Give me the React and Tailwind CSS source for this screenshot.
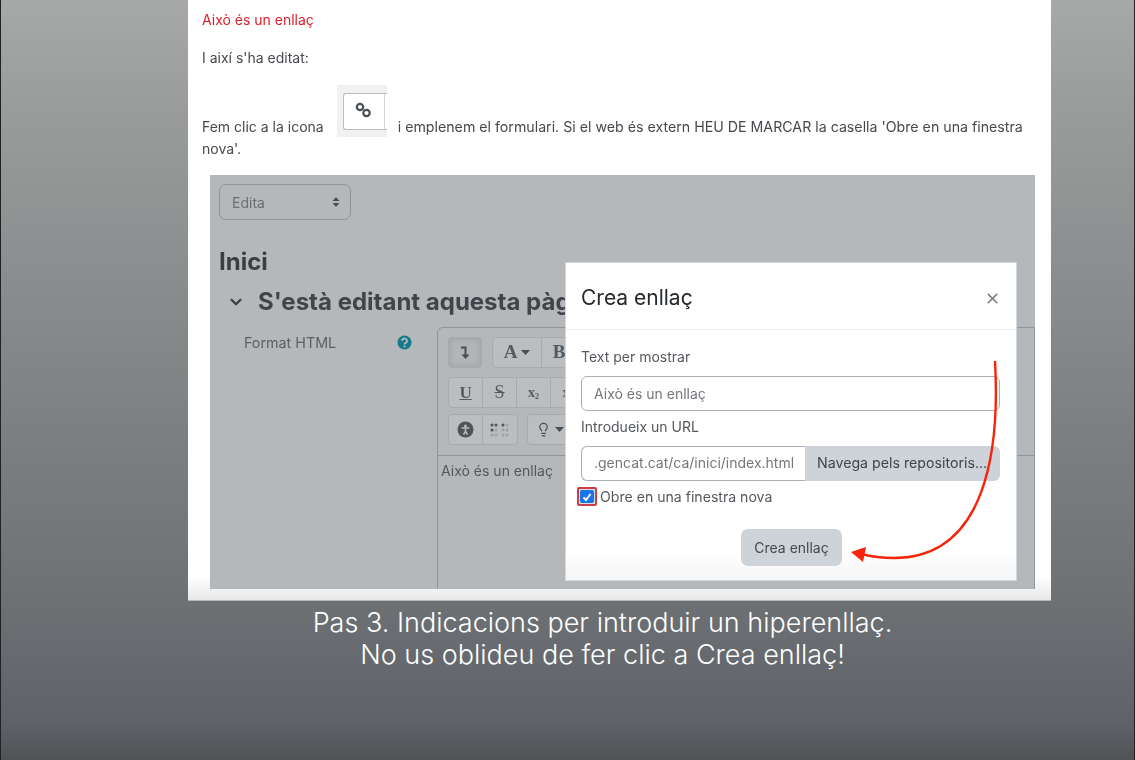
import { ChevronDown, X, Lightbulb } from 'lucide-react';

const inter = { fontFamily: 'Inter, "Liberation Sans", Arial, sans-serif' };
const serif = { fontFamily: '"Liberation Serif", serif' };

function ToolBtn({ children, w = 'w-[34px]' }) {
  return (
    <div className={`${w} h-[29px] flex items-center justify-center text-[#4a4f54]`}>
      {children}
    </div>
  );
}

function Group({ children, className = '' }) {
  return (
    <div className={`flex w-fit rounded-[4px] border border-[#a6abaf] bg-[#babec1] divide-x divide-[#a6abaf] ${className}`}>
      {children}
    </div>
  );
}

function Caret() {
  return (
    <svg width="9" height="5" viewBox="0 0 9 5" className="ml-[4px]">
      <path d="M0 0h9L4.5 5z" fill="#4a4f54" />
    </svg>
  );
}

function Editor() {
  return (
    <div className="w-[640px] h-[270px] rounded-tl-[6px] border border-[#8f9498] bg-[#b4b8bb]">
      <div className="h-[128px] border-b border-[#8f9498] pl-[10px] pt-[9px] flex flex-col">
        <div className="flex gap-[10px]">
          <Group className="shadow-[inset_0_0_6px_rgba(0,0,0,0.12)] !bg-[#b1b5b8]">
            <ToolBtn w="w-[32px]">
              <svg width="12" height="15" viewBox="0 0 12 15" fill="none" stroke="#4a4f54" strokeWidth="2">
                <path d="M2 2.5h4.5V11" />
                <path d="M2.5 9.5h8l-4 4.5z" fill="#4a4f54" stroke="none" />
              </svg>
            </ToolBtn>
          </Group>
          <Group>
            <ToolBtn w="w-[49px]">
              <span className="text-[19px] font-bold text-[#555a5e]" style={serif}>A</span>
              <Caret />
            </ToolBtn>
            <ToolBtn>
              <span className="text-[19px] font-bold text-[#555a5e]" style={serif}>B</span>
            </ToolBtn>
          </Group>
        </div>
        <Group className="mt-[9px]">
          <ToolBtn><span className="text-[17px] font-bold underline text-[#555a5e]" style={serif}>U</span></ToolBtn>
          <ToolBtn><span className="text-[18px] line-through text-[#555a5e]" style={serif}>S</span></ToolBtn>
          <ToolBtn><span className="text-[14px] font-bold text-[#555a5e]" style={serif}>x<sub className="text-[8px]">2</sub></span></ToolBtn>
          <ToolBtn><span className="text-[14px] font-bold text-[#555a5e]" style={serif}>x<sup className="text-[8px]">2</sup></span></ToolBtn>
        </Group>
        <div className="mt-[6px] flex gap-[9px]">
          <Group>
            <ToolBtn>
              <svg width="17" height="17" viewBox="0 0 17 17">
                <circle cx="8.5" cy="8.5" r="8" fill="#4f5458" />
                <circle cx="8.5" cy="5" r="1.5" fill="#b9bdc0" />
                <path d="M4.5 7h8M8.5 7v3.5M8.5 10.5l-2 3M8.5 10.5l2 3" stroke="#b9bdc0" strokeWidth="1.5" fill="none" />
              </svg>
            </ToolBtn>
            <ToolBtn>
              <svg width="20" height="14" viewBox="0 0 20 14">
                {[0, 1, 2, 3, 4, 5].map(i => (
                  <g key={i}>
                    <circle cx={2 + (i % 2) * 4} cy={2 + Math.floor(i / 2) * 5} r="1.5" fill={i < 3 ? '#4f5458' : '#9fa3a7'} />
                    <circle cx={13 + (i % 2) * 4} cy={2 + Math.floor(i / 2) * 5} r="1.5" fill={i < 1 ? '#4f5458' : '#9fa3a7'} />
                  </g>
                ))}
              </svg>
            </ToolBtn>
          </Group>
          <Group>
            <ToolBtn w="w-[44px]">
              <Lightbulb size={15} />
              <Caret />
            </ToolBtn>
          </Group>
        </div>
      </div>
      <p className="pl-[3px] pt-[6px] text-[14px] leading-[18px] text-[#54585c]">Això és un enllaç</p>
    </div>
  );
}

function LinkDialog() {
  return (
    <div className="absolute left-[355px] top-[87px] w-[452px] h-[319px] border border-[#d5d8da] bg-[linear-gradient(to_bottom,#ffffff_90%,#f6f6f6_100%)]">
      <div className="h-[67px] border-b border-[#e9ebed] pl-[15px] pr-[15px] pt-[4px] flex items-center justify-between">
        <h3 className="text-[21px] text-[#26292c]">Crea enllaç</h3>
        <X size={17} strokeWidth={2.2} className="text-[#75797d]" />
      </div>
      <div className="pl-[15px] pr-[16px] pt-[17px]">
        <label className="block text-[14px] leading-[20px] text-[#55595d]">Text per mostrar</label>
        <div className="mt-[9px] h-[35px] rounded-[6px] border border-[#a9afb6] pl-[12px] flex items-center text-[14px] text-[#73777b]">
          Això és un enllaç
        </div>
        <label className="block mt-[6px] text-[14px] leading-[20px] text-[#55595d]">Introdueix un URL</label>
        <div className="mt-[9px] h-[35px] flex">
          <div className="w-[224px] rounded-l-[6px] border border-r-0 border-[#a9afb6] pl-[12px] pb-[2px] flex items-center text-[14px] text-[#73777b] whitespace-nowrap overflow-hidden">
            .gencat.cat/ca/inici/index.html
          </div>
          <div className="flex-1 rounded-r-[6px] bg-[#ced3da] pl-[12px] pb-[2px] flex items-center text-[14.2px] text-[#3f4448] whitespace-nowrap overflow-hidden">
            Navega pels repositoris...
          </div>
        </div>
        <div className="mt-[5px] -ml-[4px] flex items-center gap-[3px] text-[14.1px] text-[#55595d]">
          <span className="w-[20px] h-[19px] border-2 border-[#cc3d4a] rounded-[2px] flex items-center justify-center bg-[#d8dde0]">
            <span className="w-[14px] h-[13px] rounded-[2px] bg-[#1976e8] flex items-center justify-center">
              <svg width="10" height="10" viewBox="0 0 10 10" fill="none" stroke="white" strokeWidth="2"><path d="M1.5 5.5L4 8l4.5-6" /></svg>
            </span>
          </span>
          Obre en una finestra nova
        </div>
        <div className="mt-[22px] flex justify-center pl-[2px]">
          <div className="w-[101px] h-[37px] rounded-[7px] bg-[#ced3da] flex items-center justify-center text-[14px] text-[#45494d]">
            Crea enllaç
          </div>
        </div>
      </div>
    </div>
  );
}

function Screenshot() {
  return (
    <div className="relative w-[825px] h-[414px] ml-[22px] mt-[17px] bg-[#b4b8bb] overflow-hidden">
      <div className="pl-[9px] pt-[9px]">
        <div className="w-[132px] h-[36px] rounded-[7px] border border-[#8f9498] pl-[12px] pr-[10px] flex items-center justify-between text-[14px] text-[#6b6f73]">
          Edita
          <svg width="8" height="12" viewBox="0 0 8 12" fill="#4a4f54"><path d="M4 1l3.5 4h-7zM4 11L.5 7h7z" /></svg>
        </div>
        <h2 className="mt-[25px] text-[24px] leading-[34px] font-bold text-[#3a3e42]">Inici</h2>
        <div className="mt-[7px] flex items-center whitespace-nowrap">
          <ChevronDown size={18} strokeWidth={3} className="ml-[8px] text-[#3a3e42]" />
          <span className="ml-[13px] text-[24px] leading-[32px] font-bold text-[#41454a]">S'està editant aquesta pàgina</span>
        </div>
        <div className="flex mt-[9px]">
          <span className="ml-[25px] w-[153px] pt-[6px] text-[14.3px] leading-[20px] text-[#5c6064]">Format HTML</span>
          <span className="w-[53px] pt-[8px] pl-[10px]">
            <svg width="15" height="15" viewBox="0 0 15 15">
              <circle cx="7.5" cy="7.5" r="7" fill="#147a8c" />
              <path d="M5 5.8a2.5 2.2 0 1 1 3.6 2c-.8.5-1.1.8-1.1 1.6" fill="none" stroke="#b4b8bb" strokeWidth="1.8" />
              <circle cx="7.5" cy="11.5" r="1.1" fill="#b4b8bb" />
            </svg>
          </span>
          <Editor />
        </div>
      </div>
      <LinkDialog />
    </div>
  );
}

export default function App() {
  return (
    <div className="relative w-[1135px] h-[760px] overflow-hidden border-x border-[#222] bg-[linear-gradient(to_bottom,#a6a9a8_0%,#9a9d9c_13%,#6d7174_79%,#5f6268_95%,#515356_100%)]" style={inter}>
      <div className="w-[863px] h-[601px] ml-[187px] border-b border-[#b5b6b7] bg-[linear-gradient(to_bottom,#ffffff_96%,#e8e8e8_100%)] blur-[0.35px]">
        <div className="px-[14px] pt-[11px] text-[14px] leading-[18px] text-[#45494d]">
          <p className="text-[#d9202a]">Això és un enllaç</p>
          <p className="mt-[20px]">I així s'ha editat:</p>
          <div className="mt-[17px] flex items-end whitespace-nowrap h-[53px]">
            <span className="pb-[1px]">Fem clic a la icona</span>
            <span className="ml-[13px] w-[50px] h-[52px] bg-[#f1f1f1] pl-[6px] pt-[8px] block">
              <span className="w-[44px] h-[37px] bg-white border-l border-y border-[#b9bdc0] rounded-l-[3px] flex items-center justify-center relative">
                <svg width="19" height="19" viewBox="0 0 19 19" fill="none" stroke="#4a4e52" strokeWidth="2.2" className="-ml-[3px] -mt-[2px]">
                  <circle cx="6" cy="6" r="3.2" />
                  <circle cx="12.5" cy="12" r="3.2" />
                </svg>
                <span className="absolute right-[2px] top-0 bottom-0 w-px bg-[#d5d8da]" />
              </span>
            </span>
            <span className="ml-[11px] pb-[1px] text-[14.2px]">i emplenem el formulari. Si el web és extern HEU DE MARCAR la casella 'Obre en una finestra</span>
          </div>
          <p className="mt-[3px]">nova'.</p>
        </div>
        <Screenshot />
      </div>

      {/* hand drawn arrow */}
      <svg className="absolute left-0 top-0 pointer-events-none" width="1135" height="760" fill="none">
        <path d="M994 361C999 450 985 558 893 558C882 558 872 557 860 554" stroke="#f5240a" strokeWidth="2.4" />
        <path d="M850 552L865 547L862 562Z" fill="#f5240a" />
      </svg>

      <div className="mt-[6px] ml-[70px] text-center text-[27px] leading-[32px] text-white font-light">
        <p>Pas 3. Indicacions per introduir un hiperenllaç.</p>
        <p>No us oblideu de fer clic a Crea enllaç!</p>
      </div>
    </div>
  );
}
